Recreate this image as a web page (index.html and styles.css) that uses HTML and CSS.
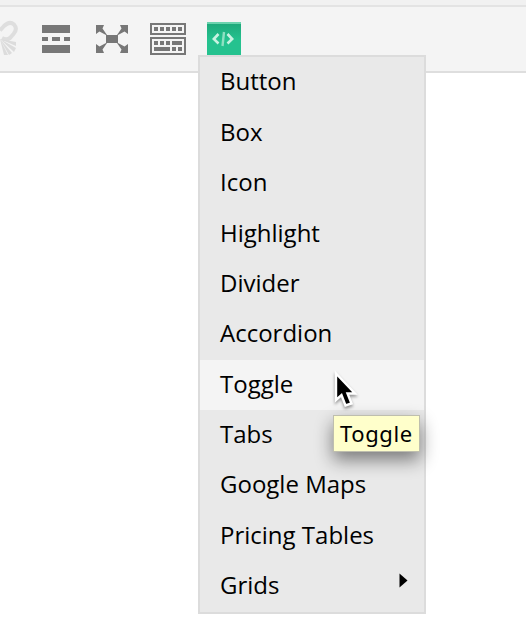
FILE: index.html
```html
<!DOCTYPE html>
<html lang="en">
<head>
<meta charset="utf-8">
<title>Editor shortcodes</title>
<link rel="stylesheet" href="styles.css">
</head>
<body>
<div class="toolbar">
  <svg class="icon unlink" width="18" height="36" viewBox="0 0 18 36">
    <path d="M0 10.500L4 6Q9.500 .5 14 4.500Q18 9 13.500 14L10 18Q6.500 20.500 2 18" fill="none" stroke="#dedede" stroke-width="4"/>
    <path d="M0 19L16 22V26ZM0 19L16 28L14 32ZM0 19L12 33L9 35ZM0 19L8 35H4Z" fill="#dcdcdc"/>
  </svg>
  <svg class="icon more" width="28" height="28" viewBox="0 0 28 28" fill="#777">
    <path d="M0 0H28V8H0ZM0 12H6V16H0ZM10 12H18V16H10ZM22 12H28V16H22ZM0 20H28V28H0Z"/>
  </svg>
  <svg class="icon expand" width="32" height="28" viewBox="0 0 32 28" fill="#777">
    <path d="M10 10H22V18H10ZM0 0H8L6.500 3.500L11 10H10L3.500 6.500L0 9ZM32 0H24L25.500 3.500L21 10H22L28.500 6.500L32 9ZM0 28H8L6.500 24.500L11 18H10L3.500 21.500L0 19ZM32 28H24L25.500 24.500L21 18H22L28.500 21.500L32 19Z"/>
  </svg>
  <svg class="icon keyboard" width="36" height="32" viewBox="0 0 36 32">
    <path d="M1 1H35V11H1ZM1 15H35V31H1Z" fill="none" stroke="#777" stroke-width="2"/>
    <path d="M4 4h4v4h-4zM10 4h4v4h-4zM16 4h4v4h-4zM22 4h4v4h-4zM28 4h4v4h-4zM4 18h4v4h-4zM10 18h4v4h-4zM16 18h4v4h-4zM22 18h10v4H22zM4 24h16v4H4zM22 24h4v4h-4zM28 24h4v4h-4z" fill="#777"/>
  </svg>
  <div class="code-button">
    <svg width="22" height="16" viewBox="0 0 22 16" fill="none" stroke="#c9f2e2" stroke-width="2.600">
      <path d="M6.500 3L1.800 8L6.500 12.500M15.500 3L20.200 8L15.500 12.500"/><path d="M12 1L10.500 15" stroke="#8fe0c2" stroke-width="2.400"/>
    </svg>
  </div>
</div>
<ul class="menu">
  <li>Button</li>
  <li>Box</li>
  <li>Icon</li>
  <li>Highlight</li>
  <li>Divider</li>
  <li>Accordion</li>
  <li class="active">Toggle</li>
  <li>Tabs</li>
  <li>Google Maps</li>
  <li>Pricing Tables</li>
  <li>Grids <svg class="arrow" width="9" height="15" viewBox="0 0 9 15"><path d="M.5 .5L8.500 7.500L.5 14.500Z"/></svg></li>
</ul>
<div class="tooltip">Toggle</div>
<svg class="cursor" width="32" height="46" viewBox="0 0 32 46">
  <path d="M7 4.500V31L12.500 26L16.500 36.500L22.500 34.500L18.500 24.500H26Z" fill="#000" stroke="#fff" stroke-width="2.400"/>
</svg>
</body>
</html>
```
FILE: styles.css
```css
body {
  margin: 0;
  height: 622px;
  overflow: hidden;
  position: relative;
  background: #fff;
  color: #000;
  font-family: "Open Sans", sans-serif;
}

.toolbar {
  box-sizing: border-box;
  height: 73px;
  display: flex;
  align-items: flex-start;
  background: #f4f4f4;
  border-top: 5px solid #f1f1f1;
  border-bottom: 2px solid #dedede;
  box-shadow: inset 0 2px #e3e3e3;
}

.icon { flex: none; }
.unlink { margin-top: 15px; }
.more { margin: 20px 0 0 24px; }
.expand { margin: 20px 0 0 26px; }
.keyboard { margin: 18px 0 0 22px; }

.code-button {
  box-sizing: border-box;
  width: 34px;
  height: 34px;
  margin: 17px 0 0 21px;
  padding: 7px 6px 0 5px;
  border-top: 2px solid #6bd3ae;
  background: linear-gradient(#1eaa7b, #25c28f 16px);
}

.code-button svg { display: block; }

.menu {
  position: absolute;
  left: 198px;
  top: 55px;
  box-sizing: border-box;
  width: 228px;
  height: 559px;
  margin: 0;
  padding: .36px 0 0;
  list-style: none;
  background: #e9e9e9;
  border: 2px solid #dcdcdc;
}

.menu li {
  display: flex;
  justify-content: space-between;
  height: 50.4px;
  padding: 0 16px 0 20px;
  font-size: 24px;
  line-height: 47.7px;
}

.menu .active { background: #f4f4f4; }
.arrow { margin-top: 12px; }

.tooltip {
  position: absolute;
  left: 333px;
  top: 415px;
  box-sizing: border-box;
  width: 87px;
  height: 37px;
  padding-left: 6px;
  background: #ffffcb;
  border: 1px solid #bebeae;
  box-shadow: 0 8px 18px rgba(0, 0, 0, .48);
  font-family: "Noto Sans", sans-serif;
  font-size: 22px;
  letter-spacing: .6px;
  line-height: 35px;
}

.cursor {
  position: absolute;
  left: 329px;
  top: 369px;
  filter: drop-shadow(0 2px 1.500px rgba(0, 0, 0, .4));
}
```
